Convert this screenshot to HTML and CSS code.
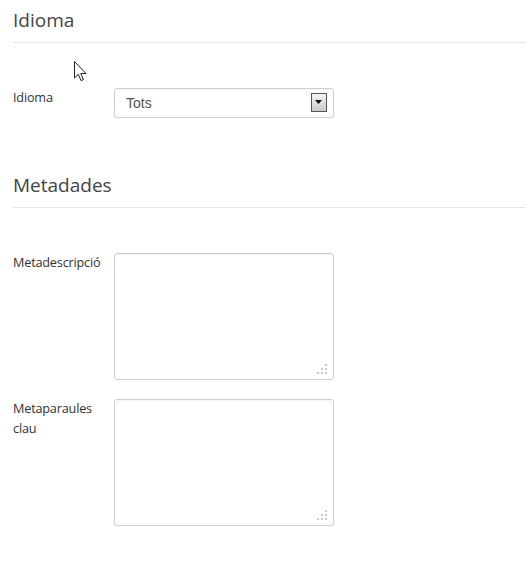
FILE: index.html
```html
<!DOCTYPE html>
<html lang="ca">
<head>
    <meta charset="UTF-8">
    <meta name="viewport" content="width=device-width, initial-scale=1.0">
    <title>Idioma i metadades</title>
    <link rel="stylesheet" href="styles.css">
</head>
<body>

    <!-- Idioma -->
    <div class="section">
        <h2>Idioma</h2>
        <div class="row">
            <label for="idioma">Idioma</label>
            <div class="select-box">
                <select id="idioma">
                    <option>Tots</option>
                </select>
                <span class="select-btn">
                    <svg width="8" height="5" viewBox="0 0 8 5"><path d="M0 0 H7 L3.5 4 Z" fill="#111"/></svg>
                </span>
            </div>
        </div>
    </div>

    <!-- Metadades -->
    <div class="section section-meta">
        <h2>Metadades</h2>
        <div class="row">
            <label for="metadesc">Metadescripció</label>
            <div class="area-box">
                <textarea id="metadesc"></textarea>
                <svg class="grip" width="10" height="10" viewBox="0 0 10 10">
                    <rect x="8" y="0" width="2" height="2"/>
                    <rect x="4" y="4" width="2" height="2"/>
                    <rect x="8" y="4" width="2" height="2"/>
                    <rect x="0" y="8" width="2" height="2"/>
                    <rect x="4" y="8" width="2" height="2"/>
                    <rect x="8" y="8" width="2" height="2"/>
                </svg>
            </div>
        </div>
        <div class="row row-gap">
            <label for="metakeys">Metaparaules clau</label>
            <div class="area-box">
                <textarea id="metakeys"></textarea>
                <svg class="grip" width="10" height="10" viewBox="0 0 10 10">
                    <rect x="8" y="0" width="2" height="2"/>
                    <rect x="4" y="4" width="2" height="2"/>
                    <rect x="8" y="4" width="2" height="2"/>
                    <rect x="0" y="8" width="2" height="2"/>
                    <rect x="4" y="8" width="2" height="2"/>
                    <rect x="8" y="8" width="2" height="2"/>
                </svg>
            </div>
        </div>
    </div>

    <!-- mouse pointer from the capture -->
    <svg class="pointer" width="13" height="21" viewBox="0 0 13 21">
        <path d="M0.5 0.5 V17 L4.3 13.3 L7 19.6 L9.4 18.6 L6.8 12.5 H12 Z" fill="#fff" stroke="#222" stroke-width="1" stroke-linejoin="round"/>
    </svg>

</body>
</html>
```

FILE: styles.css
```css
* {
    box-sizing: border-box;
    margin: 0;
    padding: 0;
}

body {
    font-family: 'Open Sans', sans-serif;
    background-color: #ffffff;
    color: #333;
    padding: 7px 0 0 13px;
    position: relative;
    min-height: 567px;
}

h2 {
    font-size: 19px;
    font-weight: normal;
    line-height: 26px;
    color: #444;
    padding-bottom: 9px;
    border-bottom: 1px solid #e6e6e6;
    margin-bottom: 45px;
}

.section-meta {
    margin-top: 54px;
}

.row {
    display: flex;
    align-items: flex-start;
}

.row-gap {
    margin-top: 19px;
}

label {
    width: 101px;
    flex-shrink: 0;
    font-size: 12.7px;
    letter-spacing: -0.2px;
    line-height: 20px;
    color: #333;
    margin-top: -1px;
    padding-right: 4px;
}

/* Select */
.select-box {
    position: relative;
    width: 220px;
    height: 30px;
}

.select-box select {
    appearance: none;
    -webkit-appearance: none;
    width: 100%;
    height: 100%;
    border: 1px solid #cfcfcf;
    border-radius: 3px;
    background-color: #fff;
    font-family: 'Liberation Sans', Arial, sans-serif;
    font-size: 14px;
    color: #555;
    padding: 0 0 0 11px;
    box-shadow: inset 0 1px 1px rgba(0, 0, 0, 0.04);
}

.select-btn {
    position: absolute;
    top: 5px;
    right: 7px;
    width: 16px;
    height: 19px;
    border: 1px solid #555;
    background: linear-gradient(#f4f4f4, #c9c9c9);
    display: flex;
    align-items: center;
    justify-content: center;
    pointer-events: none;
}

/* Textareas */
.area-box {
    position: relative;
    width: 220px;
    height: 127px;
}

.area-box textarea {
    width: 100%;
    height: 100%;
    border: 1px solid #cfcfcf;
    border-radius: 3px;
    resize: none;
    font-family: 'Open Sans', sans-serif;
    font-size: 13px;
    padding: 6px;
    box-shadow: inset 0 1px 1px rgba(0, 0, 0, 0.04);
}

.grip {
    position: absolute;
    right: 7px;
    bottom: 6px;
    fill: #cccccc;
}

.pointer {
    position: absolute;
    left: 74px;
    top: 61px;
}
```
